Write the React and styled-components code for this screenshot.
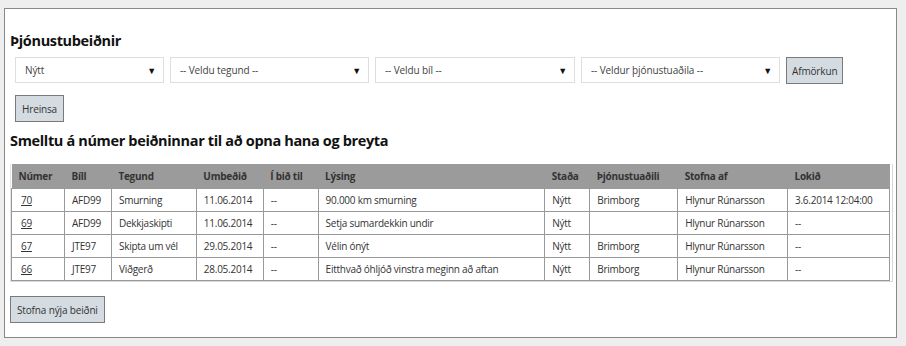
import styled, { createGlobalStyle } from "styled-components";

const GlobalStyle = createGlobalStyle`
  html, body {
    margin: 0;
    padding: 0;
    background: #eeeeee;
    font-family: "Open Sans", "Noto Sans", sans-serif;
    color: #333;
  }
`;

const Page = styled.div`
  padding: 8px 9px 8px 4px;
`;

const Panel = styled.div`
  box-sizing: border-box;
  height: 330px;
  background: #fff;
  border: 1px solid #888;
  padding: 22px 0 0 5px;
`;

const Heading = styled.h2`
  margin: 0;
  font-size: 14.5px;
  font-weight: 700;
  color: #111;
  line-height: 20px;
  letter-spacing: -0.35px;
`;

const FilterRow = styled.div`
  display: flex;
  gap: 6px;
  margin: 6px 0 0 5px;
  align-items: flex-start;
`;

const FakeSelect = styled.div`
  box-sizing: border-box;
  width: ${({ $w }) => $w}px;
  height: 26px;
  border: 1px solid #dedede;
  background: #fff;
  display: flex;
  align-items: center;
  justify-content: space-between;
  padding: 0 7px 0 9px;
  font-size: 10px;
  letter-spacing: -0.1px;
  color: #444;
`;

const Arrow = styled.span`
  font-size: 9px;
  color: #111;
`;

const Button = styled.button`
  box-sizing: border-box;
  height: 27px;
  padding: 0 ${({ $px }) => $px || 6}px;
  background: #d4dbe1;
  border: 1px solid #7a7a7a;
  font-family: inherit;
  font-size: 10px;
  letter-spacing: -0.15px;
  color: #333;
`;

const Actions = styled.div`
  margin: 11px 0 0 5px;
`;

const SubHeading = styled(Heading)`
  margin-top: 9px;
`;

const TableWrap = styled.div`
  margin: 13px 0 0 0;
  width: 881px;
  border: 1px solid #d8d8d8;
  border-top: none;
  border-left-color: #e4e4e4;
`;

const Table = styled.table`
  width: 879px;
  border-collapse: collapse;
  font-size: 10px;
  letter-spacing: -0.25px;
`;

const Th = styled.th`
  background: #9b9b9b;
  color: #333;
  font-weight: 700;
  text-align: left;
  height: 24px;
  padding: 0 7px;
  border: none;
`;

const Td = styled.td`
  height: 22px;
  padding: 0 7px;
  border: 1px solid #999;
  color: #333;
  white-space: nowrap;
`;

const Link = styled.a`
  color: #333;
  text-decoration: underline;
  padding-left: 2px;
`;

const Footer = styled.div`
  margin: 14px 0 0 0;
`;

const cols = [
  ["Númer", 53],
  ["Bíll", 47],
  ["Tegund", 85],
  ["Umbeðið", 67],
  ["Í bið til", 55],
  ["Lýsing", 227],
  ["Staða", 45],
  ["Þjónustuaðili", 88],
  ["Stofna af", 110],
  ["Lokið", 102],
];

const rows = [
  ["70", "AFD99", "Smurning", "11.06.2014", "--", "90.000 km smurning", "Nýtt", "Brimborg", "Hlynur Rúnarsson", "3.6.2014 12:04:00"],
  ["69", "AFD99", "Dekkjaskipti", "11.06.2014", "--", "Setja sumardekkin undir", "Nýtt", "", "Hlynur Rúnarsson", "--"],
  ["67", "JTE97", "Skipta um vél", "29.05.2014", "--", "Vélin ónýt", "Nýtt", "Brimborg", "Hlynur Rúnarsson", "--"],
  ["66", "JTE97", "Viðgerð", "28.05.2014", "--", "Eitthvað óhljóð vinstra meginn að aftan", "Nýtt", "Brimborg", "Hlynur Rúnarsson", "--"],
];

const selects = [
  ["Nýtt", 149],
  ["-- Veldu tegund --", 199],
  ["-- Veldu bíl --", 200],
  ["-- Veldur þjónustuaðila --", 199],
];

export default function App() {
  return (
    <>
      <GlobalStyle />
      <Page>
        <Panel>
          <Heading>Þjónustubeiðnir</Heading>
          <FilterRow>
            {selects.map(([label, w]) => (
              <FakeSelect key={label} $w={w}>
                <span>{label}</span>
                <Arrow>▼</Arrow>
              </FakeSelect>
            ))}
            <Button $px={5}>Afmörkun</Button>
          </FilterRow>
          <Actions>
            <Button $px={6}>Hreinsa</Button>
          </Actions>
          <SubHeading>Smelltu á númer beiðninnar til að opna hana og breyta</SubHeading>
          <TableWrap>
            <Table>
              <colgroup>
                {cols.map(([name, w]) => (
                  <col key={name} style={{ width: w }} />
                ))}
              </colgroup>
              <thead>
                <tr>
                  {cols.map(([name]) => (
                    <Th key={name}>{name}</Th>
                  ))}
                </tr>
              </thead>
              <tbody>
                {rows.map((r) => (
                  <tr key={r[0]}>
                    <Td>
                      <Link href="#">{r[0]}</Link>
                    </Td>
                    {r.slice(1).map((c, i) => (
                      <Td key={i}>{c}</Td>
                    ))}
                  </tr>
                ))}
              </tbody>
            </Table>
          </TableWrap>
          <Footer>
            <Button $px={6}>Stofna nýja beiðni</Button>
          </Footer>
        </Panel>
      </Page>
    </>
  );
}
